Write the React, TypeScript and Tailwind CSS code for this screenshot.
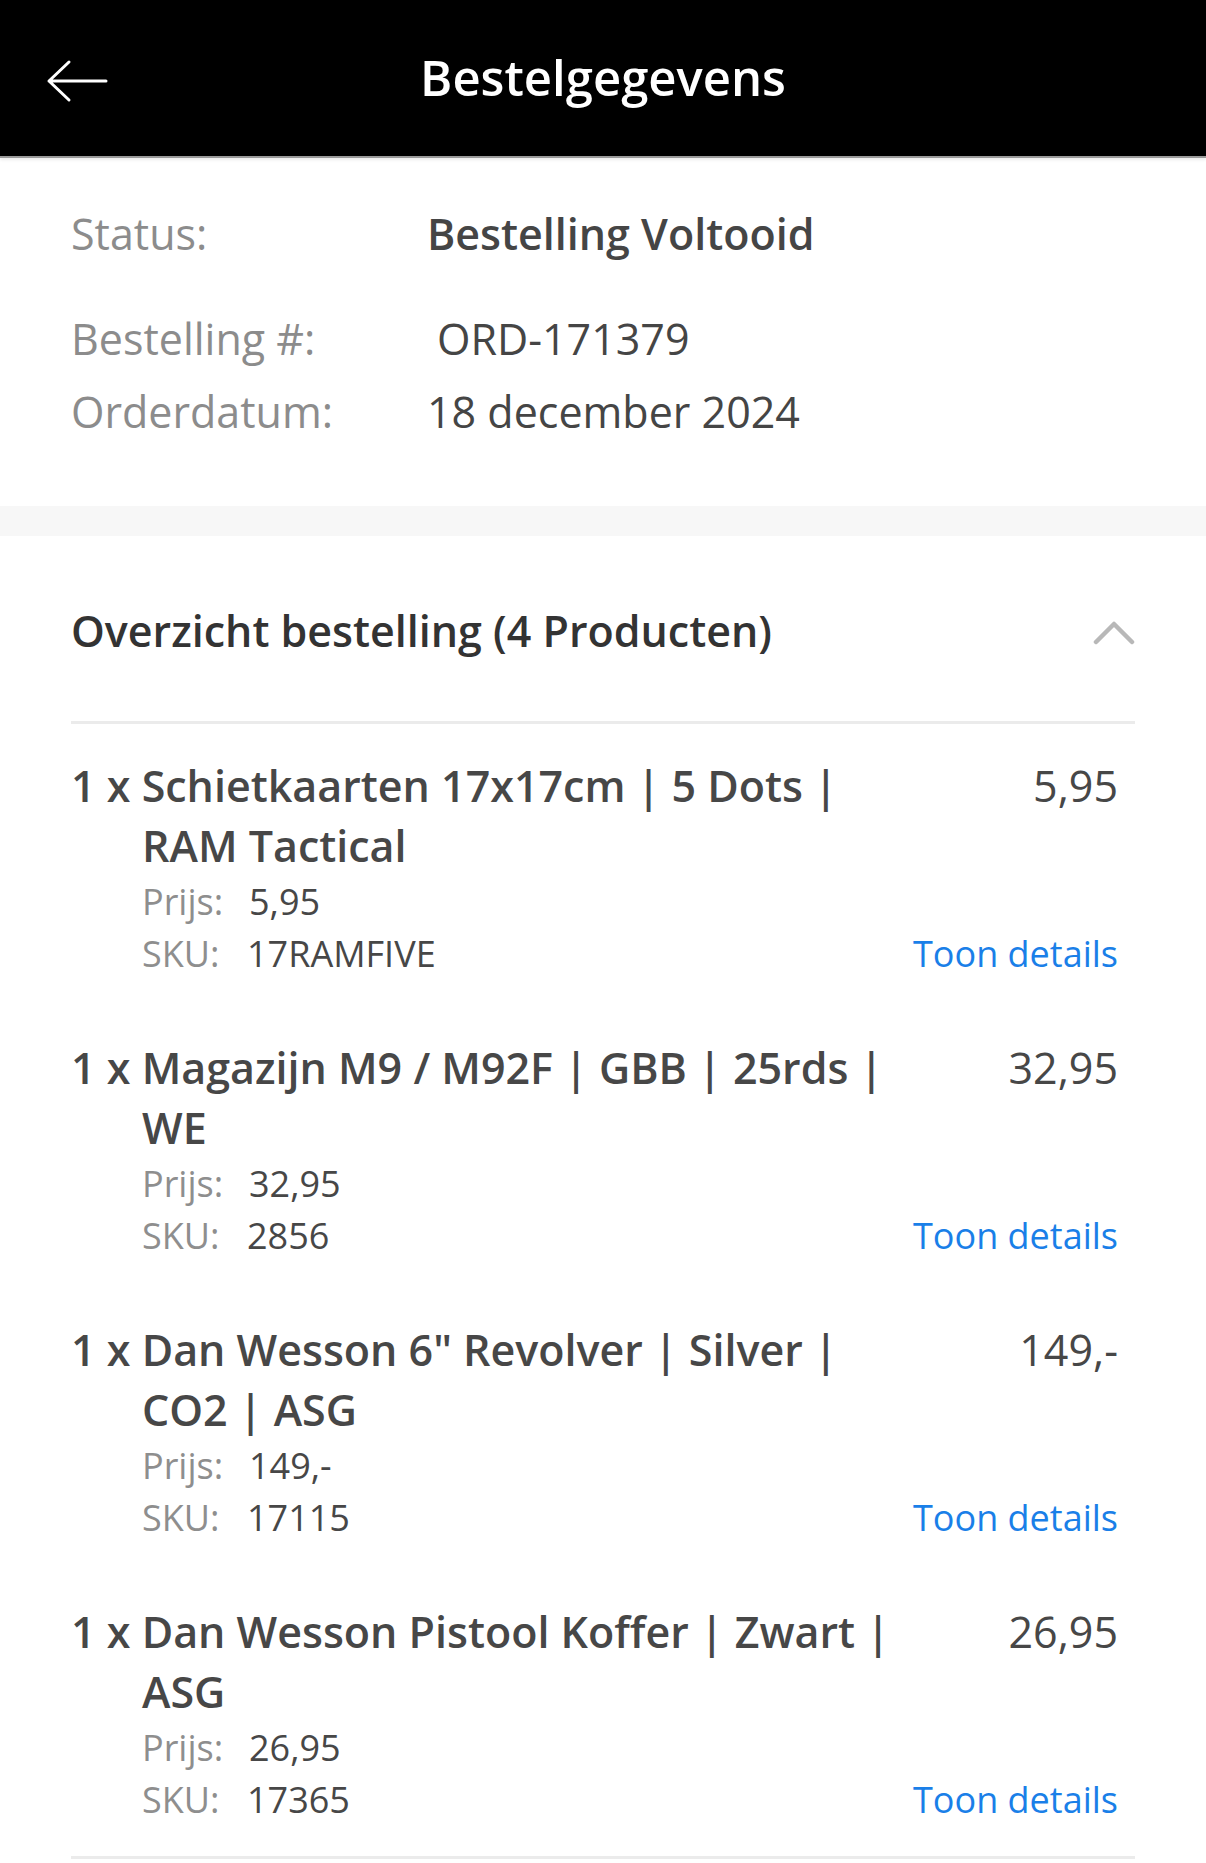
import React from 'react';

const items = [
  { qty: 1, name: 'Schietkaarten 17x17cm | 5 Dots | RAM Tactical', price: '5,95', sku: '17RAMFIVE' },
  { qty: 1, name: 'Magazijn M9 / M92F | GBB | 25rds | WE', price: '32,95', sku: '2856' },
  { qty: 1, name: 'Dan Wesson 6" Revolver | Silver | CO2 | ASG', price: '149,-', sku: '17115' },
  { qty: 1, name: 'Dan Wesson Pistool Koffer | Zwart | ASG', price: '26,95', sku: '17365' },
];

const BackArrow = () => (
  <svg width="62" height="44" viewBox="0 0 62 44" fill="none">
    <path d="M60 22 H3 M23 3 L3 22 L23 41" stroke="#fff" strokeWidth="3" strokeLinecap="round" strokeLinejoin="round" />
  </svg>
);

const ChevronUp = () => (
  <svg width="42" height="28" viewBox="0 0 42 28" fill="none">
    <path d="M3 25 L21 7 L39 25" stroke="#b8b8b8" strokeWidth="4.5" strokeLinecap="round" strokeLinejoin="round" />
  </svg>
);

const InfoRow = ({ label, value, bold, className }: { label: string; value: string; bold?: boolean; className?: string }) => (
  <div className={`flex text-[43px] leading-[60px] ${className ?? ''}`}>
    <span className="w-[356px] shrink-0 text-[#8c8c8c]">{label}</span>
    <span className={bold ? 'font-semibold text-[#454545]' : 'text-[#454545]'}>{value}</span>
  </div>
);

const App: React.FC = () => {
  return (
    <div className="min-h-screen w-full bg-white" style={{ fontFamily: '"Open Sans", sans-serif' }}>
      {/* header */}
      <div className="relative flex h-[158px] items-center justify-center border-b-2 border-[#9a9a9a] bg-black shadow-[0_2px_3px_rgba(0,0,0,0.08)]">
        <button className="absolute left-[46px] top-[59px]">
          <BackArrow />
        </button>
        <h1 className="text-[49px] font-semibold text-white">Bestelgegevens</h1>
      </div>

      {/* order info */}
      <div className="px-[71px] pt-[46px] pb-[64px]">
        <InfoRow label="Status:" value="Bestelling Voltooid" bold />
        <div className="mt-[45px] flex text-[43px] leading-[60px]">
          <span className="w-[356px] shrink-0 text-[#8c8c8c]">Bestelling #:</span>
          <span className="pl-[10px] text-[#454545]">ORD-171379</span>
        </div>
        <InfoRow label="Orderdatum:" value="18 december 2024" className="mt-[13px]" />
      </div>

      <div className="h-[30px] bg-[#f7f7f7]" />

      {/* overview */}
      <div className="px-[71px]">
        <div className="flex items-center justify-between pt-[65px] pb-[60px]">
          <h2 className="text-[43px] font-semibold leading-[60px] text-[#333]">Overzicht bestelling (4 Producten)</h2>
          <ChevronUp />
        </div>
        <div className="flex flex-col gap-[58px] border-y-[3px] border-[#ebebeb] pt-[32px] pb-[30px]">
          {items.map((item) => (
            <div key={item.sku} className="flex pr-[17px]">
              <div className="min-w-0 flex-1">
                <p className="pl-[71px] indent-[-71px] text-[43px] font-semibold leading-[60px] text-[#474747]">
                  {item.qty} x {item.name}
                </p>
                <div className="pl-[71px] text-[36px] leading-[52px]">
                  <div className="flex">
                    <span className="w-[107px] text-[#8e8e8e]">Prijs:</span>
                    <span className="text-[#474747]">{item.price}</span>
                  </div>
                  <div className="flex">
                    <span className="w-[105px] text-[#8e8e8e]">SKU:</span>
                    <span className="text-[#474747]">{item.sku}</span>
                  </div>
                </div>
              </div>
              <div className="flex w-[210px] shrink-0 flex-col items-end justify-between">
                <span className="text-[43px] leading-[60px] text-[#474747]">{item.price}</span>
                <a className="text-[36px] leading-[52px] text-[#1a7fe8]" href="#">
                  Toon details
                </a>
              </div>
            </div>
          ))}
        </div>
      </div>
    </div>
  );
};

export default App;
